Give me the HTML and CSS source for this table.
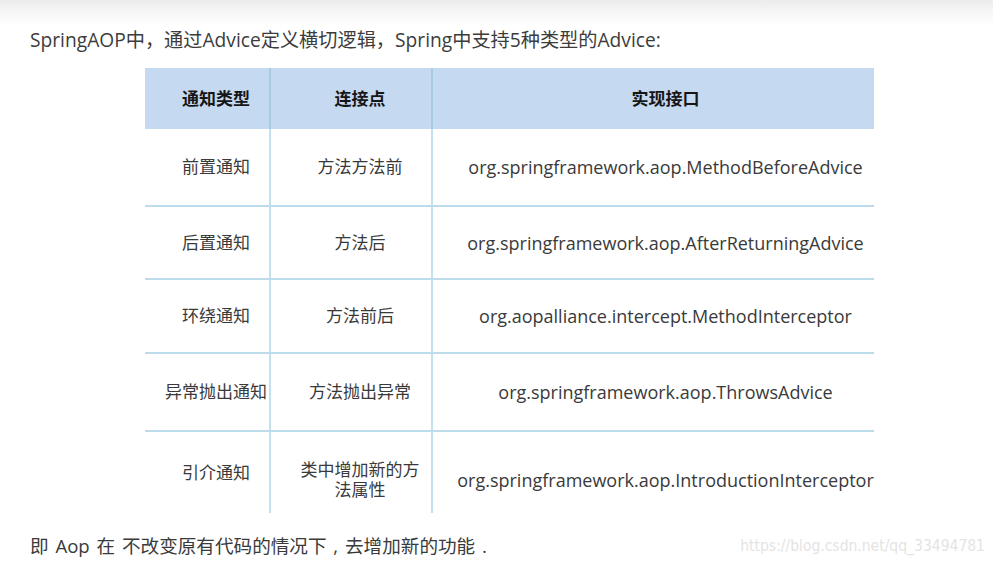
FILE: index.html
```html
<!DOCTYPE html>
<html lang="zh-CN">
<head>
<meta charset="utf-8">
<title>SpringAOP Advice</title>
<link rel="stylesheet" href="styles.css">
</head>
<body>
<div class="page">
  <p class="intro">SpringAOP中，通过Advice定义横切逻辑，Spring中支持5种类型的Advice:</p>
  <div class="table">
    <div class="row head">
      <div class="cell c1">通知类型</div>
      <div class="cell c2">连接点</div>
      <div class="cell c3">实现接口</div>
    </div>
    <div class="row r1">
      <div class="cell c1">前置通知</div>
      <div class="cell c2">方法方法前</div>
      <div class="cell c3">org.springframework.aop.MethodBeforeAdvice</div>
    </div>
    <div class="row r2">
      <div class="cell c1">后置通知</div>
      <div class="cell c2">方法后</div>
      <div class="cell c3">org.springframework.aop.AfterReturningAdvice</div>
    </div>
    <div class="row r3">
      <div class="cell c1">环绕通知</div>
      <div class="cell c2">方法前后</div>
      <div class="cell c3">org.aopalliance.intercept.MethodInterceptor</div>
    </div>
    <div class="row r4">
      <div class="cell c1">异常抛出通知</div>
      <div class="cell c2">方法抛出异常</div>
      <div class="cell c3">org.springframework.aop.ThrowsAdvice</div>
    </div>
    <div class="row r5 last">
      <div class="cell c1">引介通知</div>
      <div class="cell c2 wrap">类中增加新的方法属性</div>
      <div class="cell c3">org.springframework.aop.IntroductionInterceptor</div>
    </div>
  </div>
  <div class="footer">
    <p class="summary">即 Aop 在 不改变原有代码的情况下 , 去增加新的功能 .</p>
    <span class="watermark">https://blog.csdn.net/qq_33494781</span>
  </div>
</div>
</body>
</html>
```

FILE: styles.css
```css
html, body {
  margin: 0;
  padding: 0;
}
body {
  width: 993px;
  height: 563px;
  overflow: hidden;
  background: linear-gradient(to bottom, #ececec 0px, #f6f6f6 12px, #ffffff 26px, #ffffff 100%);
  font-family: "Open Sans", "Noto Sans CJK SC", sans-serif;
  color: #3a3a3a;
}
.page {
  display: flex;
  flex-direction: column;
  padding-top: 28px;
}
.intro {
  margin: 0 0 0 30px;
  font-size: 19.2px;
  line-height: 24px;
  color: #3c3c3c;
}
.table {
  margin: 16px 0 0 145px;
  width: 729px;
  display: flex;
  flex-direction: column;
}
.row {
  display: grid;
  grid-template-columns: 126px 162px 441px;
  border-bottom: 2px solid #bcdcec;
}
.row.last {
  border-bottom: none;
}
.head {
  height: 61px;
  background: #c5d9f1;
  border-bottom: none;
}
.r1 { height: 76px; }
.r2 { height: 71px; }
.r3 { height: 72px; }
.r4 { height: 76px; }
.r5 { height: 81px; }
.cell {
  display: flex;
  align-items: center;
  justify-content: center;
  text-align: center;
  font-size: 17px;
  line-height: 20px;
  color: #3a3a3a;
}
.c1 {
  border-right: 2px solid #c2e0ee;
  padding-left: 18px;
  white-space: nowrap;
}
.c2 {
  border-right: 2px solid #c2e0ee;
  padding: 0 9px 0 27px;
}
.c3 {
  padding-left: 24px;
  white-space: nowrap;
  font-size: 18px;
}
.head .cell {
  font-weight: 700;
  color: #161616;
  font-size: 17px;
}
.head .c1, .head .c2 {
  border-right-color: #a8cbe4;
}
.wrap {
  line-height: 20px;
  padding-top: 14px;
}
.r5 .c3 {
  padding-top: 14px;
}
.footer {
  display: flex;
  justify-content: space-between;
  align-items: center;
  margin-top: 21px;
  padding: 0 8px 0 30px;
}
.summary {
  margin: 0;
  font-size: 18.6px;
  line-height: 24px;
  word-spacing: 2px;
  color: #3a3a3a;
}
.watermark {
  font-family: "Liberation Sans Narrow", "DejaVu Sans Condensed", "Liberation Sans", sans-serif;
  font-size: 15.5px;
  color: #e4e4e4;
  line-height: 24px;
}
```
